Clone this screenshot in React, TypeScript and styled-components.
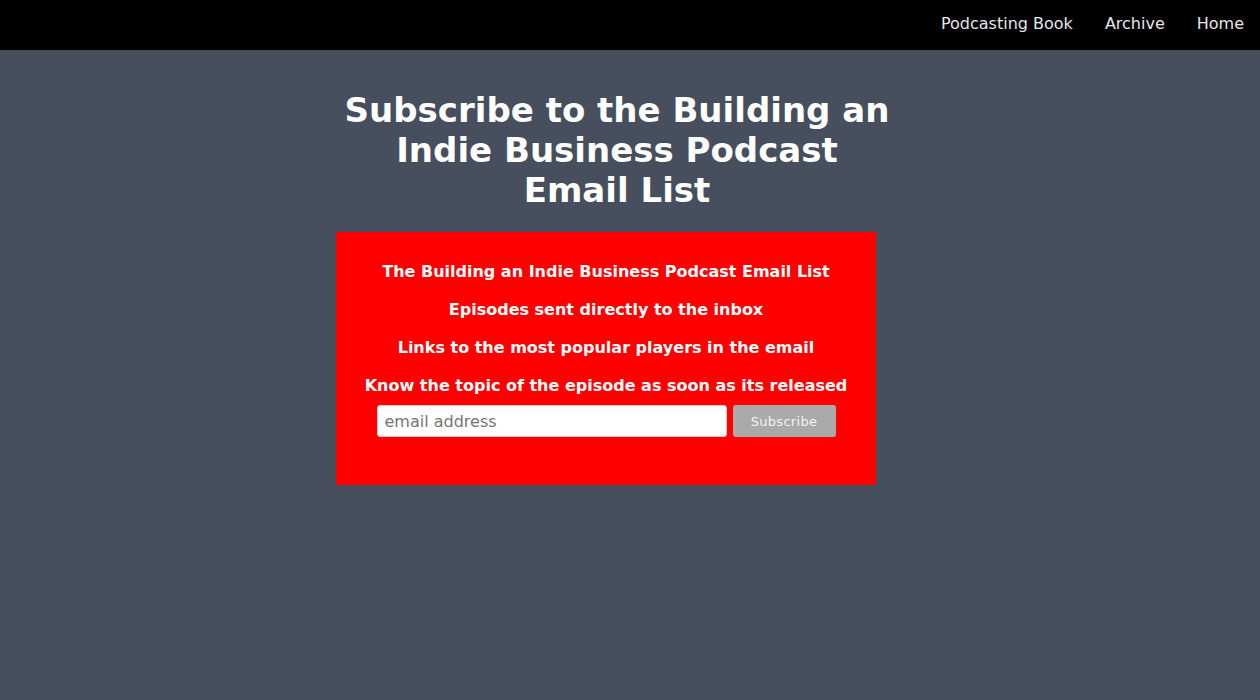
import React, { FC } from 'react'
import styled, { createGlobalStyle } from 'styled-components'

const GlobalStyle = createGlobalStyle`
  html, body {
    margin: 0;
    padding: 0;
    background: #474e5d;
    font-family: "DejaVu Sans", Verdana, sans-serif;
  }
`;

const NAV_LINKS = ['Podcasting Book', 'Archive', 'Home'];

const PERKS = [
  'The Building an Indie Business Podcast Email List',
  'Episodes sent directly to the inbox',
  'Links to the most popular players in the email',
  'Know the topic of the episode as soon as its released'
];

const App: FC = () => {
  return (
    <>
      <GlobalStyle />
      <TopBar>
        {NAV_LINKS.map((link) => (
          <NavLink key={link} href="#">{link}</NavLink>
        ))}
      </TopBar>
      <Page>
        <Column>
          <Title>{"Subscribe to the Building an Indie Business Podcast Email List"}</Title>
          <SignupBox>
            {PERKS.map((perk) => (
              <Perk key={perk}>{perk}</Perk>
            ))}
            <Form onSubmit={(e) => e.preventDefault()}>
              <EmailInput type="email" placeholder="email address" />
              <SubscribeButton type="submit">{"Subscribe"}</SubscribeButton>
            </Form>
          </SignupBox>
        </Column>
      </Page>
    </>
  );
};

export default App;

const TopBar = styled.nav`
  height: 50px;
  background: #000;
  display: flex;
  justify-content: flex-end;
  align-items: flex-start;
`;

const NavLink = styled.a`
  color: #e6e6e6;
  text-decoration: none;
  font-size: 16px;
  padding: 0 16px;
  line-height: 48px;
`;

const Page = styled.main`
  padding-top: 40px;
  min-height: 610px;
`;

const Column = styled.div`
  width: 588px;
  margin: 0 auto;
`;

const Title = styled.h1`
  width: 550px;
  margin: 0 0 22px 6px;
  font-size: 34px;
  line-height: 40px;
  font-weight: bold;
  color: #fff;
  text-align: center;
`;

const SignupBox = styled.section`
  width: 540px;
  background: #ff0000;
  padding: 21px 0 48px;
  box-sizing: border-box;
  display: flex;
  flex-direction: column;
  align-items: center;
`;

const Perk = styled.p`
  margin: 0;
  font-size: 16px;
  font-weight: bold;
  line-height: 38px;
  color: #fff;
  text-align: center;
`;

const Form = styled.form`
  display: flex;
  gap: 6px;
`;

const EmailInput = styled.input`
  width: 350px;
  height: 32px;
  box-sizing: border-box;
  border: 1px solid #ccc;
  border-radius: 3px;
  padding: 0 7px;
  font-family: inherit;
  font-size: 16px;
  color: #333;
  outline: none;

  ::placeholder {
    color: #757575;
  }
`;

const SubscribeButton = styled.button`
  width: 103px;
  height: 32px;
  border: none;
  border-radius: 3px;
  background: #aaaaaa;
  color: #f2f2f2;
  font-family: inherit;
  font-size: 13px;
  letter-spacing: 0.3px;
  cursor: pointer;
`;
